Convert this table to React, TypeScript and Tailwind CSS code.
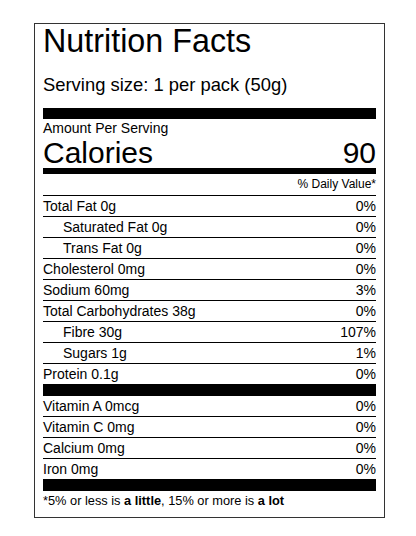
const rows = [
  { label: "Total Fat 0g", value: "0%", indent: false },
  { label: "Saturated Fat 0g", value: "0%", indent: true },
  { label: "Trans Fat 0g", value: "0%", indent: true },
  { label: "Cholesterol 0mg", value: "0%", indent: false },
  { label: "Sodium 60mg", value: "3%", indent: false },
  { label: "Total Carbohydrates 38g", value: "0%", indent: false },
  { label: "Fibre 30g", value: "107%", indent: true },
  { label: "Sugars 1g", value: "1%", indent: true },
  { label: "Protein 0.1g", value: "0%", indent: false }
];

const vitamins = [
  { label: "Vitamin A 0mcg", value: "0%" },
  { label: "Vitamin C 0mg", value: "0%" },
  { label: "Calcium 0mg", value: "0%" },
  { label: "Iron 0mg", value: "0%" }
];

function NutrientRow({ label, value, indent }: { label: string; value: string; indent?: boolean }) {
  return (
    <div className="flex items-center justify-between border-b border-black text-[14px] leading-5">
      <span className={indent ? "pl-5" : ""}>{label}</span>
      <span>{value}</span>
    </div>
  );
}

export default function App() {
  return (
    <div className="min-h-[536px] bg-white pt-[23px] text-black [font-family:'Liberation_Sans',Arial,sans-serif]">
      <div className="ml-[34px] w-[351px] border border-[#333] px-2 pb-[6px]">
        <h1 className="text-[32.3px] leading-[34px]">Nutrition Facts</h1>
        <p className="mt-[15px] text-[18.4px] leading-6">Serving size: 1 per pack (50g)</p>
        <div className="mt-[11px] h-[11px] bg-black" />
        <p className="text-[14px] leading-[18px]">Amount Per Serving</p>
        <div className="flex items-center justify-between text-[30px] leading-[31px]">
          <span>Calories</span>
          <span>90</span>
        </div>
        <div className="h-[6px] bg-black" />
        <p className="border-b border-black text-right text-[12px] leading-[21px]">% Daily Value*</p>
        {rows.map((row) => (
          <NutrientRow key={row.label} label={row.label} value={row.value} indent={row.indent} />
        ))}
        <div className="h-[11px] bg-black" />
        {vitamins.map((row) => (
          <NutrientRow key={row.label} label={row.label} value={row.value} />
        ))}
        <div className="h-[11px] bg-black" />
        <p className="text-[12.8px] leading-5">
          *5% or less is <span className="font-bold">a little</span>, 15% or more is{" "}
          <span className="font-bold">a lot</span>
        </p>
      </div>
    </div>
  );
}
